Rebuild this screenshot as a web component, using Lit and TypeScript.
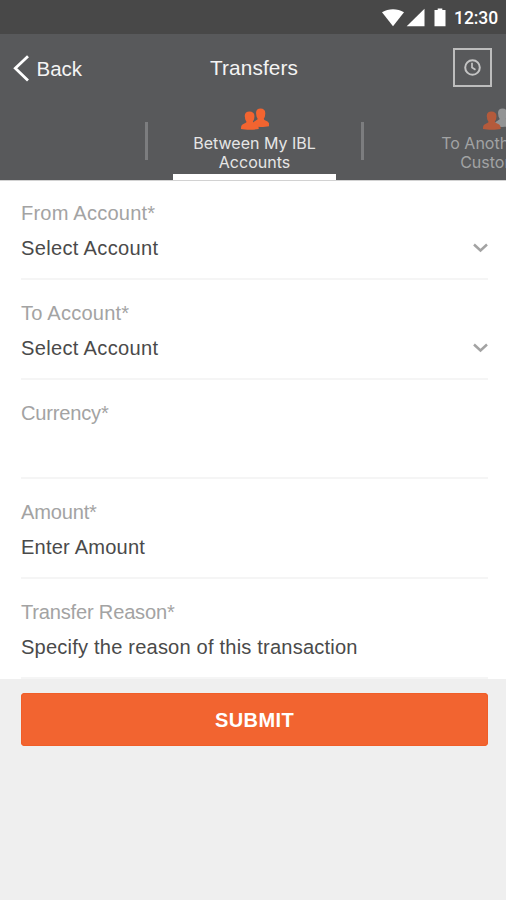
import { LitElement, html, css, svg, nothing } from "lit";
import { customElement, property } from "lit/decorators.js";

const person = svg`<path d="M0 21C-.1 18 .6 16.700 2.800 15.700 4.600 14.900 5.500 14.700 5.400 13.500 4.500 12.500 4.100 11.200 4 9.600 3 5.500 5 3.400 8.500 3.400s5.600 2.100 4.800 6.200c-.1 1.600-.5 2.900-1.400 3.900.1 1.200 1.100 1.400 2.900 2.200 2.200 1 3 2.300 2.900 5.300C13 22 4.500 22 0 21z"/>`;

@customElement("status-bar")
class StatusBar extends LitElement {
  static styles = css`
    :host { display: flex; height: 34px; background: #484848; color: #fff; justify-content: flex-end;
      align-items: center; box-sizing: border-box; padding: 1px 8px 0 0; font: 500 17.5px/20px Roboto, sans-serif; }
    svg { display: block; margin-right: 7px; }
    span { letter-spacing: -.1px; }
  `;
  render() {
    return html`<svg width="65" height="20" viewBox="0 0 65 20" fill="#fff">
        <path d="M0 4.200C6.500.1 15.500.1 22 4.200L11 18.300z" />
        <path d="M42.500 .8v17.500h-17.800z" />
        <path d="M52.500 2h3.200V.5h4.600V2h3.200V18.300h-11z" />
      </svg><span>12:30</span>`;
  }
}

@customElement("nav-header")
class NavHeader extends LitElement {
  static styles = css`
    :host { display: grid; grid-template-columns: 1fr auto 1fr; align-items: center; height: 67px; color: #f4f4f4;
      padding: 0 14px 0 13px; box-sizing: border-box; font: 20.5px/24px "Liberation Sans", sans-serif; }
    .back { display: flex; align-items: center; gap: 7.500px; padding-top: 2px; }
    .title { font-size: 20.800px; letter-spacing: .1px; padding-left: 3px; }
    .history { justify-self: end; display: grid; place-items: center; width: 39px; height: 39px;
      box-sizing: border-box; border: 2px solid #bdbdbd; }
    svg { display: block; }
  `;
  render() {
    return html`
      <div class="back">
        <svg width="16" height="27" viewBox="0 0 16 27" fill="none" stroke="#fff" stroke-width="2.800"><path d="M15 1.200 2.300 13.300 15 25.500" /></svg>
        <span>Back</span>
      </div>
      <div class="title">Transfers</div>
      <div class="history">
        <svg width="19" height="19" viewBox="0 0 19 19" fill="none" stroke="#c4c4c4" stroke-width="2"><circle cx="9.500" cy="9.500" r="7.300" /><path d="M9 4.800V9.500l3.500 2.200" stroke-width="1.700" /></svg>
      </div>`;
  }
}

@customElement("transfer-tabs")
class TransferTabs extends LitElement {
  static styles = css`
    :host { display: flex; height: 79px; overflow: hidden; color: #e6e6e6; padding-left: 145px;
      box-sizing: border-box; font: 16px/19px Inter, "Liberation Sans", sans-serif; text-align: center; }
    .sep { flex: none; width: 3px; height: 38px; margin-top: 21px; background: #7c7d7f; }
    .tab { flex: none; width: 163px; margin: 0 25px; box-sizing: border-box; padding-top: 7px;
      display: flex; flex-direction: column; align-items: center; border-bottom: 6px solid transparent; white-space: nowrap; }
    .active { border-bottom-color: #fff; }
    .next { margin-left: 51.500px; color: #a2a3a4; }
    .label { margin-top: 4px; }
    svg { display: block; }
  `;
  render() {
    return html`
      <div class="sep"></div>
      <div class="tab active">
        <svg width="28" height="22" viewBox="0 0 28 22" fill="#f26430">
          <g transform="translate(11.500 -2.800) scale(.95 1)">${person}</g>
          ${person}
        </svg>
        <div class="label">Between My IBL<br />Accounts</div>
      </div>
      <div class="sep"></div>
      <div class="tab next">
        <svg width="28" height="22" viewBox="0 0 28 22">
          <g transform="translate(11.500 -2.800) scale(.95 1)" fill="#939495">${person}</g>
          <g fill="#b45a3b">${person}</g>
        </svg>
        <div class="label">To Another IBL<br />Customer</div>
      </div>`;
  }
}

@customElement("form-field")
class FormField extends LitElement {
  @property() label = "";
  @property() value = "";
  @property({ type: Boolean }) select = false;
  static styles = css`
    :host { display: block; flex: 1; box-sizing: border-box; border-bottom: 2px solid #f5f5f5; padding-top: 21px;
      font: 20.100px/24px "Liberation Sans", sans-serif; letter-spacing: .19px; }
    .label { color: #a3a3a3; letter-spacing: -.2px; }
    .label.wide { letter-spacing: .2px; }
    .row { display: flex; justify-content: space-between; align-items: center; height: 24px; margin-top: 11px; color: #4a4a4a; }
    .choice { letter-spacing: .32px; }
    svg { display: block; }
  `;
  render() {
    return html`<div class=${this.select ? "label wide" : "label"}>${this.label}</div>
      <div class="row"><span class=${this.select ? "choice" : "entry"}>${this.value}</span>
        ${this.select ? html`<svg width="15" height="10" viewBox="0 0 15 10" fill="none" stroke="#a3a3a3" stroke-width="2.500"><path d="M1 1.500 7.500 7.500 14 1.500" /></svg>` : nothing}
      </div>`;
  }
}

@customElement("app-root")
class AppRoot extends LitElement {
  static styles = css`
    :host { display: flex; flex-direction: column; height: 900px; overflow: hidden; background: #efefef; }
    .top { background: #58595b; height: 146px; flex: none; }
    .form { background: #fff; height: 499px; flex: none; display: flex; flex-direction: column;
      box-sizing: border-box; padding: 0 18px 0 21px; box-shadow: inset 0 1px #d2d2d2; }
    .submit { margin: 14px 18px 0 21px; height: 53px; border: 0; border-radius: 4px; background: #f26430; color: #fff;
      font: bold 20px/24px "Liberation Sans", sans-serif; letter-spacing: .4px; padding: 1px 0 0; box-shadow: inset 0 0 0 1px #f05e28; }
  `;
  render() {
    return html`
      <status-bar></status-bar>
      <div class="top"><nav-header></nav-header><transfer-tabs></transfer-tabs></div>
      <div class="form">
        <form-field label="From Account*" value="Select Account" select></form-field>
        <form-field label="To Account*" value="Select Account" select></form-field>
        <form-field label="Currency*"></form-field>
        <form-field label="Amount*" value="Enter Amount"></form-field>
        <form-field label="Transfer Reason*" value="Specify the reason of this transaction"></form-field>
      </div>
      <button class="submit">SUBMIT</button>`;
  }
}
